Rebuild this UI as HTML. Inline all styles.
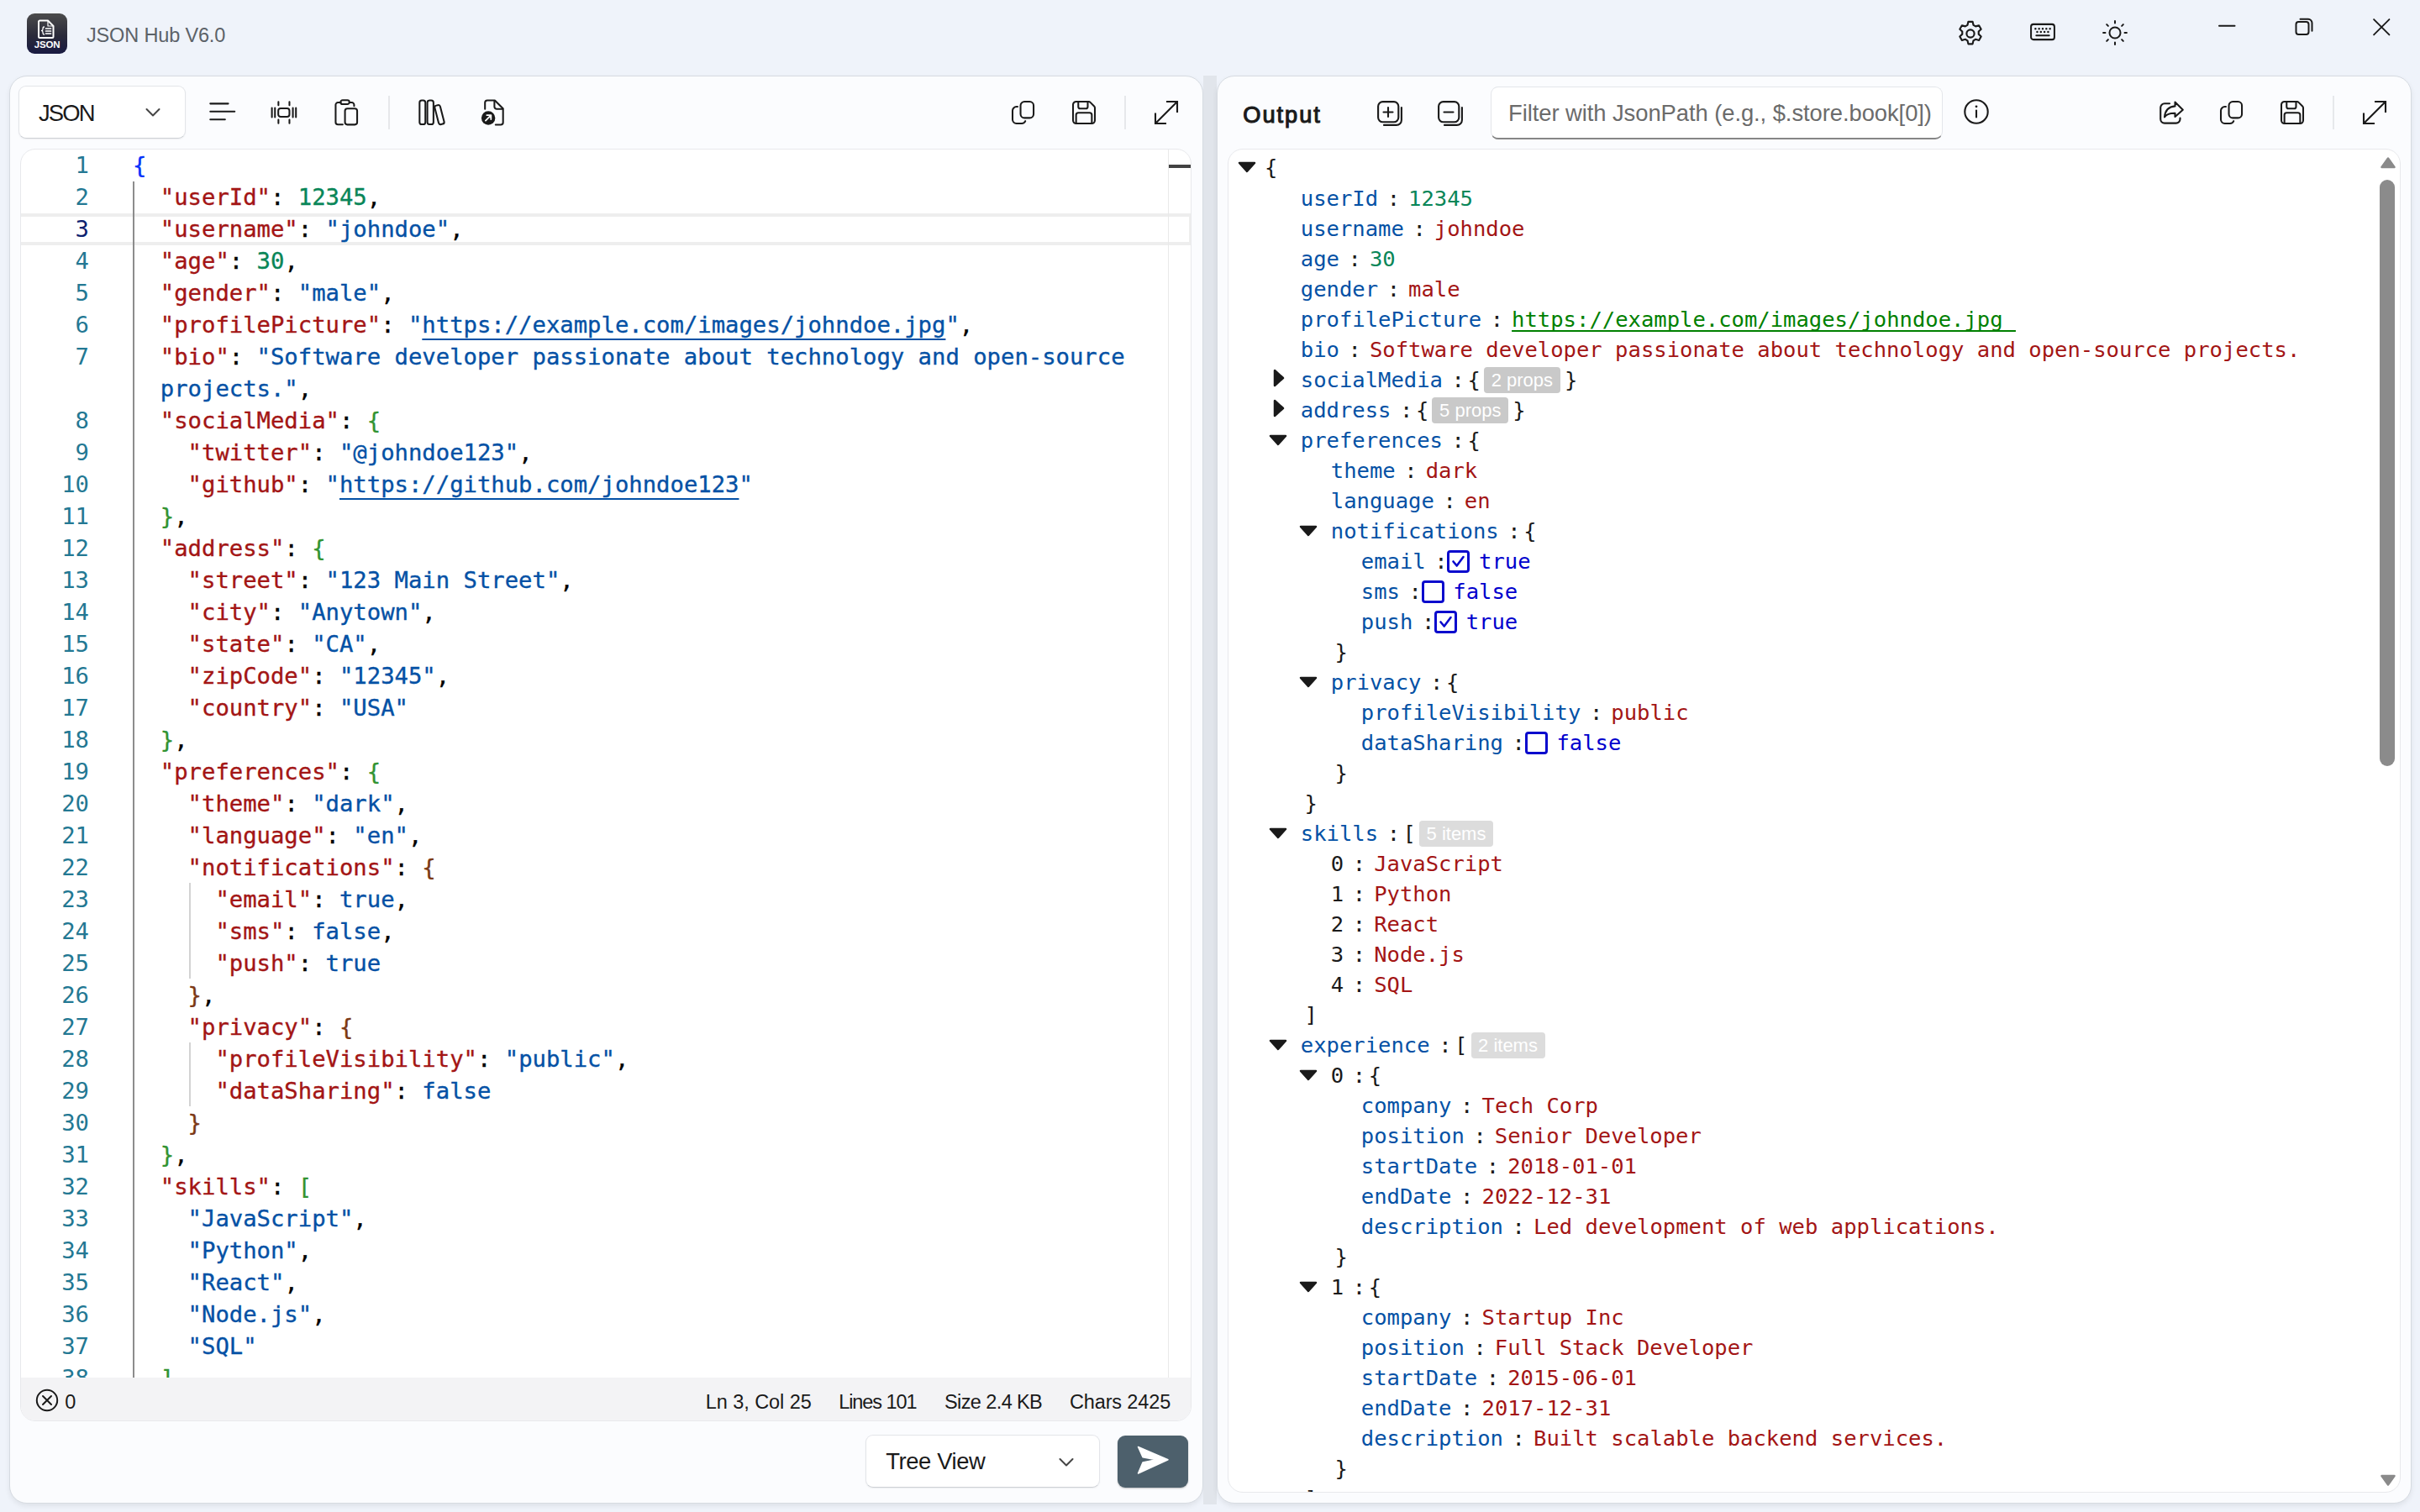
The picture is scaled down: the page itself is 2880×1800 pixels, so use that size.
<!DOCTYPE html>
<html lang="en"><head><meta charset="utf-8"><title>JSON Hub V6.0</title>
<style>
*{box-sizing:border-box;margin:0;padding:0}
html,body{width:2880px;height:1800px;overflow:hidden;background:#eff3fa}
body{font-family:'Liberation Sans', sans-serif;color:#1a1a1a;position:relative}
.abs{position:absolute}
.panel{position:absolute;background:#fbfcfe;border:1.500px solid #d6dbe1;border-radius:21px;box-shadow:0 3px 6px rgba(0,0,0,.07)}
.combo{position:absolute;background:#fff;border:1.500px solid #e3e5e9;border-bottom-color:#cdd0d5;border-radius:9px;box-shadow:0 1px 2px rgba(0,0,0,.06)}
.ico{position:absolute;overflow:visible;fill:none;stroke:#1a1a1a;stroke-width:2.1;stroke-linecap:round;stroke-linejoin:round}
.sc{transform:scale(.935);transform-origin:50% 50%;stroke-width:2.2}
.sep{position:absolute;width:2px;background:#e6e8eb}
.ed{position:absolute;background:#fff;border-radius:18px;overflow:hidden;border:1px solid #e8e9ec}
.ln{position:absolute;left:0;width:81px;text-align:right;height:38px;line-height:38px;font:27.24px 'DejaVu Sans Mono', 'Liberation Mono', monospace;line-height:38px;color:#237893;white-space:pre}
.cl{position:absolute;left:133px;height:38px;line-height:38px;font:27.24px 'DejaVu Sans Mono', 'Liberation Mono', monospace;line-height:38px;white-space:pre;color:#000;-webkit-text-stroke:.35px currentColor}
.k{color:#a31515}.s{color:#0451a5}.n{color:#098658}.b1{color:#0431fa}.b2{color:#319331}.b3{color:#7b3814}
.u{text-decoration:underline;text-decoration-thickness:2px;text-underline-offset:7px;text-decoration-skip-ink:none}
.tl{position:absolute;height:36px;line-height:36px;font:25.55px 'DejaVu Sans Mono', 'Liberation Mono', monospace;line-height:36px;white-space:pre;color:#1a1a1a}
.tk{color:#0451a5}.ts{color:#a31515}.tn{color:#098658}.tb{color:#0000cd}
.tlink{color:#008000;text-decoration:underline;text-decoration-thickness:2px;text-underline-offset:4px;text-decoration-skip-ink:none}
.badge{position:absolute;height:31px;border-radius:4px;color:#fff;font:22px 'Liberation Sans', sans-serif;line-height:31px;text-align:center}
.cb{position:absolute;width:27px;height:27px;border:3px solid #0a0acd;border-radius:4px;background:#fff}
.st{position:absolute;font:25px 'Liberation Sans', sans-serif;line-height:30px;color:#1a1a1a;white-space:pre}
</style></head>
<body>
<div class="abs" style="left:32px;top:16px;width:48px;height:48px;border-radius:9px;background:linear-gradient(180deg,#4b4b4b 0%,#2a2a3a 55%,#191a42 100%)"><svg class="abs" style="left:0;top:0" width="48" height="48" viewBox="0 0 48 48" fill="none" stroke="#fff" stroke-width="2" stroke-linejoin="round" stroke-linecap="round"><path d="M15.5 8.5h9.5l6.5 6.5v12.5a1.5 1.5 0 0 1-1.500 1.500h-14.500a1.500 1.500 0 0 1-1.500-1.500v-17.500a1.500 1.500 0 0 1 1.500-1.500z"/><path d="M25 8.500v6.500h6.500" stroke-width="1.2"/><path d="M20.500 16c-1.500 0-1.500 1-1.500 2.500s-.5 2-1.500 2c1 0 1.500.5 1.500 2s0 2.500 1.500 2.500" stroke-width="1.300"/><path d="M22.500 18h6M22.500 21h6M22.500 24h6" stroke-width="1.700"/></svg><div class="abs" style="left:0;top:30px;width:48px;text-align:center;font:bold 11.500px 'Liberation Sans', sans-serif;line-height:14px;color:#fff;letter-spacing:-.2px">JSON</div></div>
<div class="abs" id="title" style="left:103.0px;top:21.7px;font:normal 23.5px 'Liberation Sans', sans-serif;line-height:40px;white-space:pre;color:#5c6268;letter-spacing:-0.157px;">JSON Hub V6.0</div>
<svg class="ico" style="left:2329px;top:23.500px;transform:scale(1.07);stroke-width:2" width="32" height="32" viewBox="0 0 32 32"><circle cx="16" cy="16" r="4.300"/><path d="M13.600 2.800h4.800l.9 3.700 2.500 1.450 3.650-1.050 2.400 4.150-2.750 2.650v2.900l2.750 2.650-2.400 4.150-3.650-1.050-2.500 1.450-.9 3.700h-4.800l-.9-3.700-2.500-1.450-3.650 1.050-2.400-4.150 2.750-2.650v-2.900l-2.750-2.650 2.400-4.150 3.650 1.050 2.500-1.450z"/></svg>
<svg class="ico" style="left:2415px;top:22px;transform:scale(.96)" width="32" height="32" viewBox="0 0 32 32"><rect x="1.500" y="6.500" width="29" height="19" rx="3"/><path d="M8 20.500h16" /><g stroke-width="2.600"><path d="M7 12h.01M11.500 12h.01M16 12h.01M20.500 12h.01M25 12h.01M9.200 16h.01M13.700 16h.01M18.200 16h.01M22.700 16h.01"/></g></svg>
<svg class="ico" style="left:2501px;top:23px;transform:scale(.96)" width="32" height="32" viewBox="0 0 32 32"><circle cx="16" cy="16" r="6.800"/><path d="M16 1.500v2.500M16 28v2.500M1.500 16h2.500M28 16h2.500M5.750 5.750l1.800 1.800M24.450 24.450l1.800 1.800M5.750 26.250l1.800-1.800M24.450 7.550l1.800-1.800"/></svg>
<svg class="ico" style="left:2639px;top:20px;stroke-width:2" width="24" height="24" viewBox="0 0 24 24"><path d="M2 10.700h18.500"/></svg>
<svg class="ico" style="left:2731px;top:21px;stroke-width:2" width="24" height="24" viewBox="0 0 24 24"><rect x="1.500" y="5" width="15" height="15" rx="3"/><path d="M6.500 1.800h9.500a4.500 4.500 0 0 1 4.500 4.500v9.500"/></svg>
<svg class="ico" style="left:2823px;top:20.500px;stroke-width:2;transform:scale(.94);transform-origin:11.250px 11.250px" width="24" height="24" viewBox="0 0 24 24"><path d="M1.500 1.500l19.500 19.500M21 1.500l-19.500 19.500"/></svg>
<div class="panel" style="left:10.500px;top:90px;width:1421.300px;height:1699.700px"></div>
<div class="abs" style="left:1432px;top:90px;width:16px;height:1701px;background:#e1e5eb"></div>
<div class="panel" style="left:1448px;top:90px;width:1422.200px;height:1699.700px"></div>
<div class="combo" style="left:22.300px;top:102.300px;width:199px;height:63.200px"></div>
<div class="abs" id="jsonlbl" style="left:46.0px;top:114.8px;font:normal 27.4px 'Liberation Sans', sans-serif;line-height:40px;white-space:pre;color:#1a1a1a;letter-spacing:-1.821px;">JSON</div>
<svg class="ico" style="left:172px;top:124px;stroke:#444;stroke-width:2" width="20" height="20" viewBox="0 0 20 20"><path d="M2.500 6l7.500 7.500 7.500-7.500"/></svg>
<svg class="ico sc" style="left:248px;top:117px" width="32" height="32" viewBox="0 0 32 32"><path d="M1.300 5.700h22.800M1.300 15.700h31M1.300 25.900h18.800"/></svg>
<svg class="ico sc" style="left:321px;top:118px" width="34" height="32" viewBox="0 0 34 32"><rect x="9.700" y="10.600" width="14.200" height="10.800" rx="3"/><path d="M1.600 10.200v11.600M5.500 10.200v11.600M28.300 10.200v11.600M32.200 10.200v11.600M9.900 2.300v4.300M23.900 2.300v4.300M9.900 25v4.700M23.900 25v4.700"/></svg>
<svg class="ico sc" style="left:397px;top:117px" width="32" height="34" viewBox="0 0 32 34"><path d="M10.500 32.200h-6a3 3 0 0 1-3-3v-22a3 3 0 0 1 3-3h3.500M19 4.200h3a3 3 0 0 1 3 3v1.500"/><rect x="7.800" y="1.200" width="11.200" height="5.200" rx="2.600"/><rect x="13.400" y="11.900" width="15.500" height="20.500" rx="3"/></svg>
<div class="sep" style="left:462px;top:114px;height:40px"></div>
<svg class="ico sc" style="left:497px;top:117px" width="34" height="34" viewBox="0 0 34 34"><rect x="1.300" y="1.500" width="7.400" height="30.500" rx="2.800"/><rect x="11.200" y="1.500" width="7.800" height="30.500" rx="2.800"/><rect x="23" y="7.400" width="7.200" height="24.800" rx="2.600" transform="rotate(-14.500 26.600 19.800)"/></svg>
<svg class="ico sc" style="left:571px;top:117px" width="32" height="34" viewBox="0 0 32 34"><path d="M5.500 12.500v-8a3 3 0 0 1 3-3h9.500l10.500 10.500v17.500a3 3 0 0 1-3 3h-6.500"/><path d="M17.500 2v7.500a3 3 0 0 0 3 3h7.500"/><circle cx="9.700" cy="23.900" r="8.800" fill="#1a1a1a" stroke="none"/><path d="M6.300 27.300l6.600-6.600M7.800 20.300h5.300v5.300" stroke="#fff" stroke-width="2"/></svg>
<svg class="ico sc" style="left:1203px;top:119px" width="30" height="30" viewBox="0 0 30 30"><rect x="11.300" y="1.100" width="16.600" height="20.700" rx="5"/><path d="M7.500 7.600h-1.400a5 5 0 0 0-5 5v11.300a5 5 0 0 0 5 5h6.700a5 5 0 0 0 4.600-3"/></svg>
<svg class="ico sc" style="left:1275px;top:119px" width="30" height="30" viewBox="0 0 30 30"><path d="M5.100 1.100h15.900a3 3 0 0 1 2.100.9l4.900 4.900a3 3 0 0 1 .9 2.100v15.900a4 4 0 0 1-4 4h-19.800a4 4 0 0 1-4-4v-19.800a4 4 0 0 1 4-4z"/><path d="M7.800 1.500v6a2.500 2.500 0 0 0 2.500 2.500h7a2.500 2.500 0 0 0 2.500-2.500v-6"/><path d="M5 28.500v-10.500a2.800 2.800 0 0 1 2.800-2.800h14.400a2.800 2.800 0 0 1 2.800 2.800v10.500"/></svg>
<div class="sep" style="left:1338px;top:114px;height:40px"></div>
<svg class="ico" style="left:1373px;top:119px;stroke-linecap:butt;stroke-linejoin:miter" width="30" height="30" viewBox="0 0 30 30"><path d="M2 28L28 2M15 2h13v13M2 15.500v12.500h13"/></svg>
<div class="ed" style="left:24px;top:177px;width:1394px;height:1515px">
<div class="abs" style="left:0;top:76px;width:1394px;height:38px;border:4px solid #eeeeee;border-left:none"></div>
<div class="abs" style="left:1365px;top:0;width:1px;height:1462px;background:#e9e9e9"></div>
<div class="abs" style="left:1366px;top:18px;width:28px;height:4px;background:#424242"></div>
<div class="abs" style="left:132.800px;top:38px;width:1.800px;height:1430px;background:#8c8c8c"></div>
<div class="abs" style="left:200px;top:873px;width:1.500px;height:114px;background:#d3d3d3"></div>
<div class="abs" style="left:200px;top:1063px;width:1.500px;height:76px;background:#d3d3d3"></div>
<div class="ln" style="top:0px">1</div>
<div class="cl" style="top:0px"><span class="b1">{</span></div>
<div class="ln" style="top:38px">2</div>
<div class="cl" style="top:38px">  <span class="k">&quot;userId&quot;</span>: <span class="n">12345</span>,</div>
<div class="ln" style="top:76px;color:#0b216f">3</div>
<div class="cl" style="top:76px">  <span class="k">&quot;username&quot;</span>: <span class="s">&quot;johndoe&quot;</span>,</div>
<div class="ln" style="top:114px">4</div>
<div class="cl" style="top:114px">  <span class="k">&quot;age&quot;</span>: <span class="n">30</span>,</div>
<div class="ln" style="top:152px">5</div>
<div class="cl" style="top:152px">  <span class="k">&quot;gender&quot;</span>: <span class="s">&quot;male&quot;</span>,</div>
<div class="ln" style="top:190px">6</div>
<div class="cl" style="top:190px">  <span class="k">&quot;profilePicture&quot;</span>: <span class="s">&quot;</span><span class="s u">https://example.com/images/johndoe.jpg</span><span class="s">&quot;</span>,</div>
<div class="ln" style="top:228px">7</div>
<div class="cl" style="top:228px">  <span class="k">&quot;bio&quot;</span>: <span class="s">&quot;Software developer passionate about technology and open-source</span></div>
<div class="cl" style="top:266px">  <span class="s">projects.&quot;</span>,</div>
<div class="ln" style="top:304px">8</div>
<div class="cl" style="top:304px">  <span class="k">&quot;socialMedia&quot;</span>: <span class="b2">{</span></div>
<div class="ln" style="top:342px">9</div>
<div class="cl" style="top:342px">    <span class="k">&quot;twitter&quot;</span>: <span class="s">&quot;@johndoe123&quot;</span>,</div>
<div class="ln" style="top:380px">10</div>
<div class="cl" style="top:380px">    <span class="k">&quot;github&quot;</span>: <span class="s">&quot;</span><span class="s u">https://github.com/johndoe123</span><span class="s">&quot;</span></div>
<div class="ln" style="top:418px">11</div>
<div class="cl" style="top:418px">  <span class="b2">}</span>,</div>
<div class="ln" style="top:456px">12</div>
<div class="cl" style="top:456px">  <span class="k">&quot;address&quot;</span>: <span class="b2">{</span></div>
<div class="ln" style="top:494px">13</div>
<div class="cl" style="top:494px">    <span class="k">&quot;street&quot;</span>: <span class="s">&quot;123 Main Street&quot;</span>,</div>
<div class="ln" style="top:532px">14</div>
<div class="cl" style="top:532px">    <span class="k">&quot;city&quot;</span>: <span class="s">&quot;Anytown&quot;</span>,</div>
<div class="ln" style="top:570px">15</div>
<div class="cl" style="top:570px">    <span class="k">&quot;state&quot;</span>: <span class="s">&quot;CA&quot;</span>,</div>
<div class="ln" style="top:608px">16</div>
<div class="cl" style="top:608px">    <span class="k">&quot;zipCode&quot;</span>: <span class="s">&quot;12345&quot;</span>,</div>
<div class="ln" style="top:646px">17</div>
<div class="cl" style="top:646px">    <span class="k">&quot;country&quot;</span>: <span class="s">&quot;USA&quot;</span></div>
<div class="ln" style="top:684px">18</div>
<div class="cl" style="top:684px">  <span class="b2">}</span>,</div>
<div class="ln" style="top:722px">19</div>
<div class="cl" style="top:722px">  <span class="k">&quot;preferences&quot;</span>: <span class="b2">{</span></div>
<div class="ln" style="top:760px">20</div>
<div class="cl" style="top:760px">    <span class="k">&quot;theme&quot;</span>: <span class="s">&quot;dark&quot;</span>,</div>
<div class="ln" style="top:798px">21</div>
<div class="cl" style="top:798px">    <span class="k">&quot;language&quot;</span>: <span class="s">&quot;en&quot;</span>,</div>
<div class="ln" style="top:836px">22</div>
<div class="cl" style="top:836px">    <span class="k">&quot;notifications&quot;</span>: <span class="b3">{</span></div>
<div class="ln" style="top:874px">23</div>
<div class="cl" style="top:874px">      <span class="k">&quot;email&quot;</span>: <span class="s">true</span>,</div>
<div class="ln" style="top:912px">24</div>
<div class="cl" style="top:912px">      <span class="k">&quot;sms&quot;</span>: <span class="s">false</span>,</div>
<div class="ln" style="top:950px">25</div>
<div class="cl" style="top:950px">      <span class="k">&quot;push&quot;</span>: <span class="s">true</span></div>
<div class="ln" style="top:988px">26</div>
<div class="cl" style="top:988px">    <span class="b3">}</span>,</div>
<div class="ln" style="top:1026px">27</div>
<div class="cl" style="top:1026px">    <span class="k">&quot;privacy&quot;</span>: <span class="b3">{</span></div>
<div class="ln" style="top:1064px">28</div>
<div class="cl" style="top:1064px">      <span class="k">&quot;profileVisibility&quot;</span>: <span class="s">&quot;public&quot;</span>,</div>
<div class="ln" style="top:1102px">29</div>
<div class="cl" style="top:1102px">      <span class="k">&quot;dataSharing&quot;</span>: <span class="s">false</span></div>
<div class="ln" style="top:1140px">30</div>
<div class="cl" style="top:1140px">    <span class="b3">}</span></div>
<div class="ln" style="top:1178px">31</div>
<div class="cl" style="top:1178px">  <span class="b2">}</span>,</div>
<div class="ln" style="top:1216px">32</div>
<div class="cl" style="top:1216px">  <span class="k">&quot;skills&quot;</span>: <span class="b2">[</span></div>
<div class="ln" style="top:1254px">33</div>
<div class="cl" style="top:1254px">    <span class="s">&quot;JavaScript&quot;</span>,</div>
<div class="ln" style="top:1292px">34</div>
<div class="cl" style="top:1292px">    <span class="s">&quot;Python&quot;</span>,</div>
<div class="ln" style="top:1330px">35</div>
<div class="cl" style="top:1330px">    <span class="s">&quot;React&quot;</span>,</div>
<div class="ln" style="top:1368px">36</div>
<div class="cl" style="top:1368px">    <span class="s">&quot;Node.js&quot;</span>,</div>
<div class="ln" style="top:1406px">37</div>
<div class="cl" style="top:1406px">    <span class="s">&quot;SQL&quot;</span></div>
<div class="ln" style="top:1444px">38</div>
<div class="cl" style="top:1444px">  <span class="b2">]</span>,</div>
<div class="abs" style="left:0;top:1462px;width:1394px;height:53px;background:#f3f3f5"></div>
<svg class="ico" style="left:17px;top:1475px;stroke-width:2" width="28" height="28" viewBox="0 0 28 28"><circle cx="14" cy="14" r="12.200"/><path d="M9 9l10 10M19 9l-10 10"/></svg>
</div>
<div class="abs" id="st0" style="left:77.2px;top:1648.6px;font:normal 23.5px 'Liberation Sans', sans-serif;line-height:40px;white-space:pre;color:#1a1a1a;">0</div>
<div class="abs" id="st1" style="left:839.8px;top:1648.6px;font:normal 23.5px 'Liberation Sans', sans-serif;line-height:40px;white-space:pre;color:#1a1a1a;letter-spacing:-0.067px;">Ln 3, Col 25</div>
<div class="abs" id="st2" style="left:998.2px;top:1648.6px;font:normal 23.5px 'Liberation Sans', sans-serif;line-height:40px;white-space:pre;color:#1a1a1a;letter-spacing:-1.078px;">Lines 101</div>
<div class="abs" id="st3" style="left:1124.0px;top:1648.6px;font:normal 23.5px 'Liberation Sans', sans-serif;line-height:40px;white-space:pre;color:#1a1a1a;letter-spacing:-0.600px;">Size 2.4 KB</div>
<div class="abs" id="st4" style="left:1273.0px;top:1648.6px;font:normal 23.5px 'Liberation Sans', sans-serif;line-height:40px;white-space:pre;color:#1a1a1a;letter-spacing:-0.144px;">Chars 2425</div>
<div class="combo" style="left:1030.300px;top:1708.300px;width:279px;height:63.200px"></div>
<div class="abs" id="tvlbl" style="left:1054.2px;top:1719.9px;font:normal 27.4px 'Liberation Sans', sans-serif;line-height:40px;white-space:pre;color:#1a1a1a;letter-spacing:-0.387px;">Tree View</div>
<svg class="ico" style="left:1259px;top:1731px;stroke:#444;stroke-width:2" width="20" height="20" viewBox="0 0 20 20"><path d="M2.500 6l7.500 7.500 7.500-7.500"/></svg>
<div class="abs" style="left:1330px;top:1709px;width:84px;height:62px;border-radius:9px;background:#4d606c;box-shadow:0 1px 2px rgba(0,0,0,.25)"><svg class="abs" style="left:0;top:0" width="84" height="62" viewBox="0 0 84 62"><path d="M24.500 13.500l35.500 15.300-35.500 16.200 5.500-13 16-3.200-16-3z" fill="#fff" stroke="#fff" stroke-width="1.500" stroke-linejoin="round"/></svg></div>
<div class="abs" id="outlbl" style="left:1479.3px;top:116.7px;font:normal 27.2px 'Liberation Sans', sans-serif;line-height:40px;white-space:pre;color:#1a1a1a;letter-spacing:1.975px;-webkit-text-stroke:1.1px #1a1a1a;">Output</div>
<svg class="ico" style="left:1639px;top:120px" width="32" height="32" viewBox="0 0 32 32"><rect x="1.100" y="1.100" width="24.200" height="24.200" rx="5.500"/><path d="M7.500 13.500h11M13 8v11"/><path d="M8 28.900h14.900a6 6 0 0 0 6-6v-14.900"/></svg>
<svg class="ico" style="left:1711px;top:120px" width="32" height="32" viewBox="0 0 32 32"><rect x="1.100" y="1.100" width="24.200" height="24.200" rx="5.500"/><path d="M7.500 13.500h11"/><path d="M8 28.900h14.900a6 6 0 0 0 6-6v-14.900"/></svg>
<div class="abs" style="left:1774px;top:103px;width:538px;height:63px;background:#fff;border:1px solid #e4e6ea;border-bottom:2px solid #868686;border-radius:9px"></div>
<div class="abs" id="filt" style="left:1795.0px;top:115.4px;font:normal 27.4px 'Liberation Sans', sans-serif;line-height:40px;white-space:pre;color:#6b6b6b;letter-spacing:-0.069px;">Filter with JsonPath (e.g., $.store.book[0])</div>
<svg class="ico" style="left:2336px;top:117px" width="32" height="32" viewBox="0 0 32 32"><circle cx="16" cy="16" r="13.700"/><path d="M16 14.500v8"/><path d="M16 9.800h.01" stroke-width="2.800"/></svg>
<svg class="ico" style="left:2569px;top:119px" width="32" height="32" viewBox="0 0 32 32"><path d="M13 4.300h-6a4.800 4.800 0 0 0-4.800 4.800v13.700a4.800 4.800 0 0 0 4.800 4.800h13.700a4.800 4.800 0 0 0 4.800-4.800v-1.200"/><path d="M19.500 2.600l9.300 9.100-9.300 8.300v-4.200c-6-.2-10 1.200-12.500 4.600.6-7.900 5-12.400 12.500-13z"/></svg>
<svg class="ico sc" style="left:2641px;top:119px" width="30" height="30" viewBox="0 0 30 30"><rect x="11.300" y="1.100" width="16.600" height="20.700" rx="5"/><path d="M7.500 7.600h-1.400a5 5 0 0 0-5 5v11.300a5 5 0 0 0 5 5h6.700a5 5 0 0 0 4.600-3"/></svg>
<svg class="ico sc" style="left:2713px;top:119px" width="30" height="30" viewBox="0 0 30 30"><path d="M5.100 1.100h15.900a3 3 0 0 1 2.100.9l4.900 4.900a3 3 0 0 1 .9 2.100v15.900a4 4 0 0 1-4 4h-19.800a4 4 0 0 1-4-4v-19.800a4 4 0 0 1 4-4z"/><path d="M7.800 1.500v6a2.500 2.500 0 0 0 2.500 2.500h7a2.500 2.500 0 0 0 2.500-2.500v-6"/><path d="M5 28.500v-10.500a2.800 2.800 0 0 1 2.800-2.800h14.400a2.800 2.800 0 0 1 2.800 2.800v10.500"/></svg>
<div class="sep" style="left:2776px;top:114px;height:40px"></div>
<svg class="ico" style="left:2811px;top:119px;stroke-linecap:butt;stroke-linejoin:miter" width="30" height="30" viewBox="0 0 30 30"><path d="M2 28L28 2M15 2h13v13M2 15.500v12.500h13"/></svg>
<div class="ed" style="left:1461px;top:177px;width:1396px;height:1600px">
<svg class="abs" style="left:1370px;top:8px" width="20" height="16" viewBox="0 0 20 16"><path d="M10 2.500l7.500 10.500h-15z" fill="#8a8a8a" stroke="#8a8a8a" stroke-width="2.500" stroke-linejoin="round"/></svg>
<svg class="abs" style="left:1370px;top:1576px" width="20" height="16" viewBox="0 0 20 16"><path d="M10 13.500l7.500-10.500h-15z" fill="#8a8a8a" stroke="#8a8a8a" stroke-width="2.500" stroke-linejoin="round"/></svg>
<div class="abs" style="left:1370px;top:36px;width:18px;height:698px;border-radius:9px;background:#8b8b8b"></div>
<svg class="abs" style="left:11px;top:14.0px" width="22" height="14" viewBox="0 0 22 14"><path d="M2 2h18l-9 10z" fill="#1a1a1a" stroke="#1a1a1a" stroke-width="2.500" stroke-linejoin="round"/></svg>
<div class="tl " style="left:43.0px;top:3.4px">{</div>
<div class="tl tk" style="left:85.8px;top:40.4px">userId</div>
<div class="tl " style="left:188.7px;top:40.4px">:</div>
<div class="tl tn" style="left:214.1px;top:40.4px">12345</div>
<div class="tl tk" style="left:85.8px;top:76.4px">username</div>
<div class="tl " style="left:219.4px;top:76.4px">:</div>
<div class="tl ts" style="left:244.8px;top:76.4px">johndoe</div>
<div class="tl tk" style="left:85.8px;top:112.4px">age</div>
<div class="tl " style="left:142.5px;top:112.4px">:</div>
<div class="tl tn" style="left:167.9px;top:112.4px">30</div>
<div class="tl tk" style="left:85.8px;top:148.4px">gender</div>
<div class="tl " style="left:188.7px;top:148.4px">:</div>
<div class="tl ts" style="left:214.1px;top:148.4px">male</div>
<div class="tl tk" style="left:85.8px;top:184.4px">profilePicture</div>
<div class="tl " style="left:311.7px;top:184.4px">:</div>
<div class="tl tlink" style="left:337.1px;top:184.4px">https://example.com/images/johndoe.jpg </div>
<div class="tl tk" style="left:85.8px;top:220.4px">bio</div>
<div class="tl " style="left:142.5px;top:220.4px">:</div>
<div class="tl ts" style="left:167.9px;top:220.4px">Software developer passionate about technology and open-source projects.</div>
<svg class="abs" style="left:53.0px;top:261.0px" width="14" height="22" viewBox="0 0 14 22"><path d="M2 2v18l10-9z" fill="#1a1a1a" stroke="#1a1a1a" stroke-width="2.500" stroke-linejoin="round"/></svg>
<div class="tl tk" style="left:85.8px;top:256.4px">socialMedia</div>
<div class="tl " style="left:265.6px;top:256.4px">:</div>
<div class="tl " style="left:284.5px;top:256.4px">{</div>
<div class="badge" style="left:303.9px;top:258.5px;width:91px;background:#c9c9c9">2 props</div>
<div class="tl " style="left:399.9px;top:256.4px">}</div>
<svg class="abs" style="left:53.0px;top:297.0px" width="14" height="22" viewBox="0 0 14 22"><path d="M2 2v18l10-9z" fill="#1a1a1a" stroke="#1a1a1a" stroke-width="2.500" stroke-linejoin="round"/></svg>
<div class="tl tk" style="left:85.8px;top:292.4px">address</div>
<div class="tl " style="left:204.1px;top:292.4px">:</div>
<div class="tl " style="left:223.0px;top:292.4px">{</div>
<div class="badge" style="left:242.3px;top:294.5px;width:91px;background:#c9c9c9">5 props</div>
<div class="tl " style="left:338.3px;top:292.4px">}</div>
<svg class="abs" style="left:48.0px;top:339.0px" width="22" height="14" viewBox="0 0 22 14"><path d="M2 2h18l-9 10z" fill="#1a1a1a" stroke="#1a1a1a" stroke-width="2.500" stroke-linejoin="round"/></svg>
<div class="tl tk" style="left:85.8px;top:328.4px">preferences</div>
<div class="tl " style="left:265.6px;top:328.4px">:</div>
<div class="tl " style="left:284.5px;top:328.4px">{</div>
<div class="tl tk" style="left:121.8px;top:364.4px">theme</div>
<div class="tl " style="left:209.3px;top:364.4px">:</div>
<div class="tl ts" style="left:234.7px;top:364.4px">dark</div>
<div class="tl tk" style="left:121.8px;top:400.4px">language</div>
<div class="tl " style="left:255.4px;top:400.4px">:</div>
<div class="tl ts" style="left:280.8px;top:400.4px">en</div>
<svg class="abs" style="left:84.0px;top:447.0px" width="22" height="14" viewBox="0 0 22 14"><path d="M2 2h18l-9 10z" fill="#1a1a1a" stroke="#1a1a1a" stroke-width="2.500" stroke-linejoin="round"/></svg>
<div class="tl tk" style="left:121.8px;top:436.4px">notifications</div>
<div class="tl " style="left:332.3px;top:436.4px">:</div>
<div class="tl " style="left:351.2px;top:436.4px">{</div>
<div class="tl tk" style="left:157.8px;top:472.4px">email</div>
<div class="tl " style="left:245.3px;top:472.4px">:</div>
<div class="cb" style="left:260.4px;top:476.5px"><svg class="abs" style="left:0;top:0" width="21" height="21" viewBox="0 0 21 21"><path d="M4.500 10.500l4.200 5 7.800-10.500" fill="none" stroke="#0a0acd" stroke-width="2.600" stroke-linecap="round" stroke-linejoin="round"/></svg></div>
<div class="tl tb" style="left:298.1px;top:472.4px">true</div>
<div class="tl tk" style="left:157.8px;top:508.4px">sms</div>
<div class="tl " style="left:214.5px;top:508.4px">:</div>
<div class="cb" style="left:229.6px;top:512.5px"></div>
<div class="tl tb" style="left:267.3px;top:508.4px">false</div>
<div class="tl tk" style="left:157.8px;top:544.4px">push</div>
<div class="tl " style="left:229.9px;top:544.4px">:</div>
<div class="cb" style="left:245.0px;top:548.5px"><svg class="abs" style="left:0;top:0" width="21" height="21" viewBox="0 0 21 21"><path d="M4.500 10.500l4.200 5 7.800-10.500" fill="none" stroke="#0a0acd" stroke-width="2.600" stroke-linecap="round" stroke-linejoin="round"/></svg></div>
<div class="tl tb" style="left:282.7px;top:544.4px">true</div>
<div class="tl " style="left:126.6px;top:580.4px">}</div>
<svg class="abs" style="left:84.0px;top:627.0px" width="22" height="14" viewBox="0 0 22 14"><path d="M2 2h18l-9 10z" fill="#1a1a1a" stroke="#1a1a1a" stroke-width="2.500" stroke-linejoin="round"/></svg>
<div class="tl tk" style="left:121.8px;top:616.4px">privacy</div>
<div class="tl " style="left:240.1px;top:616.4px">:</div>
<div class="tl " style="left:259.0px;top:616.4px">{</div>
<div class="tl tk" style="left:157.8px;top:652.4px">profileVisibility</div>
<div class="tl " style="left:429.9px;top:652.4px">:</div>
<div class="tl ts" style="left:455.3px;top:652.4px">public</div>
<div class="tl tk" style="left:157.8px;top:688.4px">dataSharing</div>
<div class="tl " style="left:337.6px;top:688.4px">:</div>
<div class="cb" style="left:352.7px;top:692.5px"></div>
<div class="tl tb" style="left:390.4px;top:688.4px">false</div>
<div class="tl " style="left:126.6px;top:724.4px">}</div>
<div class="tl " style="left:90.6px;top:760.4px">}</div>
<svg class="abs" style="left:48.0px;top:807.0px" width="22" height="14" viewBox="0 0 22 14"><path d="M2 2h18l-9 10z" fill="#1a1a1a" stroke="#1a1a1a" stroke-width="2.500" stroke-linejoin="round"/></svg>
<div class="tl tk" style="left:85.8px;top:796.4px">skills</div>
<div class="tl " style="left:188.7px;top:796.4px">:</div>
<div class="tl " style="left:207.6px;top:796.4px">[</div>
<div class="badge" style="left:227.0px;top:798.5px;width:88px;background:#dcdcdc">5 items</div>
<div class="tl " style="left:121.8px;top:832.4px">0</div>
<div class="tl " style="left:147.8px;top:832.4px">:</div>
<div class="tl ts" style="left:173.2px;top:832.4px">JavaScript</div>
<div class="tl " style="left:121.8px;top:868.4px">1</div>
<div class="tl " style="left:147.8px;top:868.4px">:</div>
<div class="tl ts" style="left:173.2px;top:868.4px">Python</div>
<div class="tl " style="left:121.8px;top:904.4px">2</div>
<div class="tl " style="left:147.8px;top:904.4px">:</div>
<div class="tl ts" style="left:173.2px;top:904.4px">React</div>
<div class="tl " style="left:121.8px;top:940.4px">3</div>
<div class="tl " style="left:147.8px;top:940.4px">:</div>
<div class="tl ts" style="left:173.2px;top:940.4px">Node.js</div>
<div class="tl " style="left:121.8px;top:976.4px">4</div>
<div class="tl " style="left:147.8px;top:976.4px">:</div>
<div class="tl ts" style="left:173.2px;top:976.4px">SQL</div>
<div class="tl " style="left:90.6px;top:1012.4px">]</div>
<svg class="abs" style="left:48.0px;top:1059.0px" width="22" height="14" viewBox="0 0 22 14"><path d="M2 2h18l-9 10z" fill="#1a1a1a" stroke="#1a1a1a" stroke-width="2.500" stroke-linejoin="round"/></svg>
<div class="tl tk" style="left:85.8px;top:1048.4px">experience</div>
<div class="tl " style="left:250.2px;top:1048.4px">:</div>
<div class="tl " style="left:269.1px;top:1048.4px">[</div>
<div class="badge" style="left:288.5px;top:1050.5px;width:88px;background:#dcdcdc">2 items</div>
<svg class="abs" style="left:84.0px;top:1095.0px" width="22" height="14" viewBox="0 0 22 14"><path d="M2 2h18l-9 10z" fill="#1a1a1a" stroke="#1a1a1a" stroke-width="2.500" stroke-linejoin="round"/></svg>
<div class="tl " style="left:121.8px;top:1084.4px">0</div>
<div class="tl " style="left:147.8px;top:1084.4px">:</div>
<div class="tl " style="left:166.7px;top:1084.4px">{</div>
<div class="tl tk" style="left:157.8px;top:1120.4px">company</div>
<div class="tl " style="left:276.1px;top:1120.4px">:</div>
<div class="tl ts" style="left:301.5px;top:1120.4px">Tech Corp</div>
<div class="tl tk" style="left:157.8px;top:1156.4px">position</div>
<div class="tl " style="left:291.4px;top:1156.4px">:</div>
<div class="tl ts" style="left:316.8px;top:1156.4px">Senior Developer</div>
<div class="tl tk" style="left:157.8px;top:1192.4px">startDate</div>
<div class="tl " style="left:306.8px;top:1192.4px">:</div>
<div class="tl ts" style="left:332.2px;top:1192.4px">2018-01-01</div>
<div class="tl tk" style="left:157.8px;top:1228.4px">endDate</div>
<div class="tl " style="left:276.1px;top:1228.4px">:</div>
<div class="tl ts" style="left:301.5px;top:1228.4px">2022-12-31</div>
<div class="tl tk" style="left:157.8px;top:1264.4px">description</div>
<div class="tl " style="left:337.6px;top:1264.4px">:</div>
<div class="tl ts" style="left:363.0px;top:1264.4px">Led development of web applications.</div>
<div class="tl " style="left:126.6px;top:1300.4px">}</div>
<svg class="abs" style="left:84.0px;top:1347.0px" width="22" height="14" viewBox="0 0 22 14"><path d="M2 2h18l-9 10z" fill="#1a1a1a" stroke="#1a1a1a" stroke-width="2.500" stroke-linejoin="round"/></svg>
<div class="tl " style="left:121.8px;top:1336.4px">1</div>
<div class="tl " style="left:147.8px;top:1336.4px">:</div>
<div class="tl " style="left:166.7px;top:1336.4px">{</div>
<div class="tl tk" style="left:157.8px;top:1372.4px">company</div>
<div class="tl " style="left:276.1px;top:1372.4px">:</div>
<div class="tl ts" style="left:301.5px;top:1372.4px">Startup Inc</div>
<div class="tl tk" style="left:157.8px;top:1408.4px">position</div>
<div class="tl " style="left:291.4px;top:1408.4px">:</div>
<div class="tl ts" style="left:316.8px;top:1408.4px">Full Stack Developer</div>
<div class="tl tk" style="left:157.8px;top:1444.4px">startDate</div>
<div class="tl " style="left:306.8px;top:1444.4px">:</div>
<div class="tl ts" style="left:332.2px;top:1444.4px">2015-06-01</div>
<div class="tl tk" style="left:157.8px;top:1480.4px">endDate</div>
<div class="tl " style="left:276.1px;top:1480.4px">:</div>
<div class="tl ts" style="left:301.5px;top:1480.4px">2017-12-31</div>
<div class="tl tk" style="left:157.8px;top:1516.4px">description</div>
<div class="tl " style="left:337.6px;top:1516.4px">:</div>
<div class="tl ts" style="left:363.0px;top:1516.4px">Built scalable backend services.</div>
<div class="tl " style="left:126.6px;top:1552.4px">}</div>
<div class="tl " style="left:90.6px;top:1588.4px">]</div>
</div>
</body></html>
